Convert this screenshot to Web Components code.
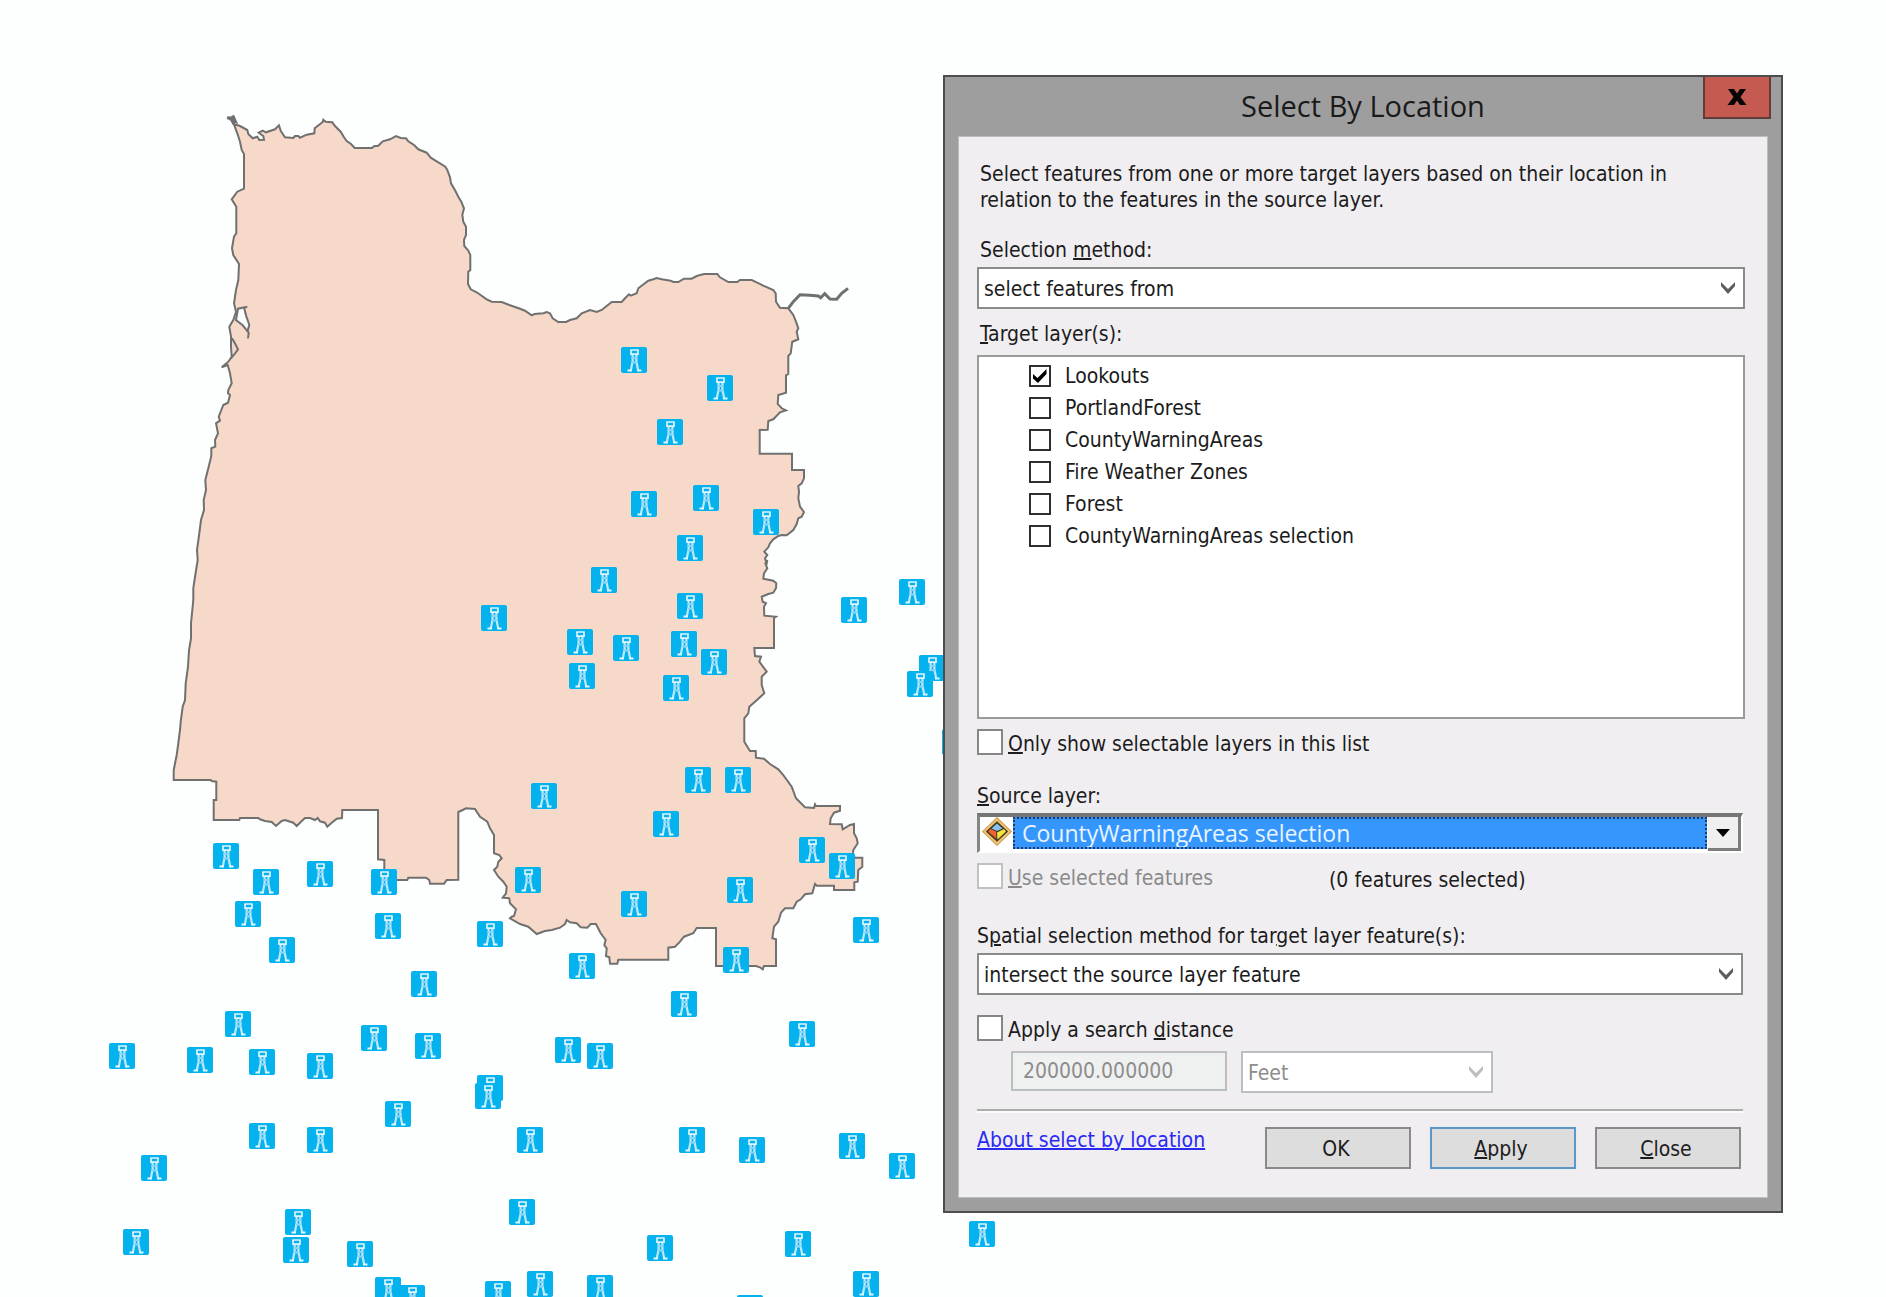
<!DOCTYPE html>
<html lang="en">
<head>
<meta charset="utf-8">
<title>Select By Location</title>
<style>
  html, body { height: 100%; }
  body {
    margin: 0;
    background: #fdfefe;
    color: #1c1c1c;
    font: 21px/26px "DejaVu Sans Condensed", "Liberation Sans", sans-serif;
  }
</style>
</head>
<body>
<map-workspace>
  <lookout-map></lookout-map>
  <dialog-window slot="window" heading="Select By Location">
    <location-form></location-form>
  </dialog-window>
</map-workspace>

<script>
/* Shared base: clones the class's markup into an open shadow root. */
class Base extends HTMLElement {
  connectedCallback() {
    if (this.shadowRoot) return;
    const t = document.createElement('template');
    t.innerHTML = this.view();
    this.attachShadow({ mode: 'open' }).append(t.content.cloneNode(true));
  }
  attr(name, fallback = '') { return this.getAttribute(name) ?? fallback; }
}

/* Free canvas that holds the map and the windows floating over it. */
customElements.define('map-workspace', class extends Base {
  view() {
    return `<style>
      :host { display: block; position: relative; height: 100vh; overflow: hidden; }
    </style><slot></slot><slot name="window"></slot>`;
  }
});

/* Boundary sections, digitised at three units per pixel from each sheet's own corner. */
const BOUNDARY = [
  [160, 90, '222,103 240,108 262,120 265,132 278,145 292,140 298,150 312,149 310,138 296,128 308,122 318,127 345,118 357,106 362,122 375,142 400,144 405,138 415,138 420,143 440,134 463,130 464,115 488,96 490,89 497,95 517,97 525,108 542,125 552,142 560,153 573,162 584,174 636,174 642,169 655,167 668,154 690,148 708,138 722,144 738,145 745,154 762,165 775,178 800,188 812,203 830,214 856,230 862,240 870,262 873,280 886,302 895,320 904,335 912,355 907,375 910,395 918,410 918,435 912,450 913,468 925,482 931,495 931,540 925,545 924,582 932,598 950,607 980,628 995,635 1025,636 1048,645'],
  [480, 250, '120,176 135,182 155,196 163,192 190,190 200,186 210,190 218,205 235,216 258,216 270,210 290,205 305,190 330,180 350,186 365,180 395,156 425,156 435,145 447,133 452,137 470,130 475,115 505,92 520,88 530,84 545,88 572,92 580,96 595,96 612,86 635,86 650,78 672,72 712,72 720,82 745,96 772,96 780,90 815,90 830,97 850,107 880,120 887,130 888,155 900,173 925,175 940,195 948,215 955,235 950,245 955,268 937,275 932,310 925,318 925,372 918,376 918,428 895,435 893,462 905,475 918,481 900,487 880,508 865,513 863,539 839,540 839,611 936,611 936,660 972,660 972,685 965,700 955,708 957,725 955,745 960,770 972,786 965,800 955,805 950,822 940,840 920,856 905,855 895,858 880,868 870,880 865,892 853,905 862,915 855,925 860,940'],
  [560, 560, '622,0 616,10 622,25 612,40 610,56 640,62 649,70 648,85 640,98 625,102 605,110 608,125 618,130 612,140 613,167 648,170 642,175 642,264 583,264 585,288 603,290 598,305 620,335 605,350 605,375 613,400 585,425 568,440 565,460 553,475 553,545 570,573 587,573 588,593 612,596 630,612 655,628 670,645 695,680 708,715 735,742 762,744 765,733 768,738 840,738 840,752 822,758 812,775 810,792 845,793 848,808 870,795 882,792 882,820 890,835 893,850 880,870 878,885 885,893 907,893 907,920 895,930 893,965 883,967 883,990 822,990 822,977 770,977 765,972 757,1000 735,1003 722,1018 710,1025 700,1045 675,1045 663,1058 655,1085 642,1100 637,1135 648,1138 648,1218 612,1218 608,1228 600,1222 588,1218 468,1218 468,1104 410,1104 400,1120 372,1130 360,1145 345,1160 325,1163 325,1199 175,1199 172,1211 150,1211 148,1192 138,1188 140,1165 133,1155 137,1140 122,1120 108,1092 92,1092 82,1103 62,1102 50,1090 30,1087 20,1080 15,1092'],
  [150, 740, '1230,563 1205,570 1185,573 1160,582 1135,560 1110,552 1080,535 1085,530 1092,528 1098,508 1080,490 1078,475 1058,473 1068,460 1070,440 1060,425 1045,410 1032,390 1042,380 1045,365 1055,355 1048,345 1032,340 1032,285 1020,265 1012,245 990,230 975,207 948,205 938,210 925,216 925,419 890,420 882,431 840,431 838,420 828,413 775,413 772,420 703,420 703,360 684,358 684,210 577,210 576,234 560,236 545,248 532,260 525,248 510,244 503,234 495,240 480,234 465,234 452,246 440,258 430,248 405,240 395,243 378,258 365,246 345,243 330,238 325,234 270,234 268,240 191,240 191,180 199,180 199,125 185,123 182,120 71,120 71,90 80,45 85,10'],
  [0, 0, '540,2190 542,2165 548,2120 555,2100 557,2050 564,2000 567,1950 573,1915 573,1870 580,1800 580,1765 586,1725 593,1680 591,1650 598,1600 603,1560 612,1530 611,1500 618,1470 616,1440 626,1400 634,1368 634,1345 646,1340 645,1320 654,1300 648,1270 660,1262 656,1250 670,1215 684,1208 690,1185 684,1180'],
  [160, 90, '205,900 215,880 210,850 203,825 185,832 205,815 215,800 213,770 213,740 208,710 220,690 228,665 222,640 228,600 235,570 237,522 220,495 216,475 222,440 229,430 229,350 215,328 232,305 252,296 252,192 245,180 240,155 232,130']
];
const trace = (ox, oy, pts) => pts.split(' ').map(p => {
  const [x, y] = p.split(',');
  return (ox + x / 3).toFixed(1) + ',' + (oy + y / 3).toFixed(1);
}).join(' ');

/* Lookout towers, by the centre of each symbol. */
const LOOKOUTS = [
  [634,360],[720,388],[670,432],[644,504],[706,498],[766,522],[690,548],[604,580],[690,606],[494,618],
  [580,642],[626,648],[684,644],[714,662],[582,676],[676,688],[854,610],[912,592],[932,668],[920,684],[955,742],
  [698,780],[738,780],[544,796],[666,824],[812,850],[842,866],[740,890],[528,880],[634,904],[866,930],[736,960],
  [582,966],[684,1004],[226,856],[266,882],[320,874],[384,882],[248,914],[282,950],[388,926],[490,934],[424,984],
  [238,1024],[374,1038],[428,1046],[122,1056],[200,1060],[262,1062],[320,1066],[568,1050],[600,1056],[802,1034],
  [490,1088],[488,1096],[398,1114],[262,1136],[320,1140],[530,1140],[692,1140],[752,1150],[852,1146],[902,1166],
  [154,1168],[298,1222],[296,1250],[136,1242],[360,1254],[522,1212],[660,1248],[798,1244],[982,1234],
  [388,1290],[412,1298],[498,1294],[540,1284],[600,1288],[750,1308],[866,1284]
];

customElements.define('lookout-map', class extends Base {
  view() {
    const outline = BOUNDARY.map(s => trace(...s)).join(' ');
    const pins = LOOKOUTS.map(([x, y]) => `<use href="#tower" x="${x - 13}" y="${y - 13}"/>`).join('');
    return `<style>
      :host { display: block; height: 100%; }
      svg { display: block; width: 100%; height: 100%; }
      .line { fill: none; stroke: #707070; stroke-width: 2; }
      .spur { stroke-width: 3; }
    </style>
    <svg role="img" aria-label="Map of fire lookouts">
      <defs>
        <g id="tower">
          <rect width="26" height="26" rx="2" fill="#04b2ee"/>
          <path d="M9.500 3H17.500M10 2.500V8M17 2.500V8M10 7.200H17" fill="none" stroke="#e0f4fd" stroke-width="1.700"/>
          <path d="M11.600 8V14.500L9.800 23.500M15.400 8V14.500L17.200 23.500" fill="none" stroke="#bfe8fa" stroke-width="2.200"/>
          <path d="M11 11H16M11 15.500H16" fill="none" stroke="#8fd6f5" stroke-width="2"/>
          <path d="M6.500 23.500H11M16 23.500H20.500" stroke="#e4f6fd" stroke-width="1.800"/>
        </g>
      </defs>
      <polygon points="${outline}" fill="#f7d9c9" stroke="#707070" stroke-width="2"/>
      <polygon points="${trace(160, 90, '232,655 250,655 256,680 268,705 258,718 244,706 228,690')}" fill="#fdfefe"/>
      <polyline class="line" points="${trace(160, 90, '262,650 234,656 228,690 248,706 266,728 264,745')}"/>
      <polyline class="line" points="${trace(160, 90, '252,652 258,676 268,705 262,726')}"/>
      <polyline class="line" points="${trace(160, 90, '216,745 226,762 234,778 224,792 212,806')}"/>
      <polyline class="line spur" points="${trace(160, 90, '222,103 212,84 202,83 226,94 218,76')}"/>
      <polyline class="line spur" points="${trace(480, 250, '925,175 940,155 960,134 990,136 1015,138 1022,143 1034,131 1050,147 1070,148 1085,130 1104,115')}"/>
      ${pins}
    </svg>`;
  }
});

/* Window frame with a title bar, a close button and a content area. */
customElements.define('dialog-window', class extends Base {
  view() {
    return `<style>
      :host {
        display: flex; flex-direction: column; box-sizing: border-box;
        position: absolute; left: 50%; right: 103px; top: 75px;
        border: 2px solid #4d4d4d; background: #9e9e9e; padding: 0 14px 14px;
      }
      header { display: grid; grid-template-columns: 1fr auto 1fr; height: 60px; align-items: start; }
      h1 { grid-column: 2; margin: 8px 0 0; font: 400 29px/42px "Open Sans", sans-serif; color: #1a1a1a; }
      button {
        justify-self: end; display: grid; place-items: center; width: 68px; height: 42px; padding: 0; margin-right: -4px;
        background: #c45a50; border: 2px solid #633c39; border-top: 0;
      }
      main { background: #f0eef1; box-shadow: 0 0 0 1px #bdbcbe; }
    </style>
    <header>
      <h1>${this.attr('heading')}</h1>
      <button type="button" aria-label="Close window">
        <svg width="20" height="16" viewBox="0 0 20 16"><path d="M1 0H7L10 4.500L13 0H19L13.500 8L19.500 16H13L10 11.500L7 16H0.500L6.500 8Z" fill="#050505"/></svg>
      </button>
    </header>
    <main><slot></slot></main>`;
  }
});

/* Caption above a flat drop-down. */
customElements.define('select-field', class extends Base {
  view() {
    return `<style>
      :host { display: flex; flex-direction: column; gap: 4px; }
      label { padding-left: var(--label-inset, 0); }
      ::slotted(u) { text-decoration-thickness: 2px; }
      div { display: grid; align-items: center; }
      select {
        grid-area: 1 / 1; width: 100%; height: 42px; box-sizing: border-box; margin: 0; padding: 2px 40px 0 5px;
        appearance: none; font: inherit; color: #1c1c1c; background: #fff;
        border: 2px solid #8b8b8b; border-radius: 0; opacity: 1;
      }
      svg { grid-area: 1 / 1; justify-self: end; margin-right: 9px; pointer-events: none; color: #5c5c5c; }
      select:disabled { color: #8d8d8d; border-color: #bcbfc1; }
      select:disabled + svg { color: #bdbdbd; }
    </style>
    ${this.hasAttribute('label') ? '' : '<label for="s"><slot></slot></label>'}
    <div>
      <select id="s" ${this.hasAttribute('label') ? `aria-label="${this.attr('label')}"` : ''} ${this.hasAttribute('disabled') ? 'disabled' : ''}><option>${this.attr('value')}</option></select>
      <svg width="16" height="14" viewBox="0 0 16 14"><path d="M1 1V5L8 13L15 5V1L8 8Z" fill="currentColor"/></svg>
    </div>`;
  }
});

/* Sunken drop-down that shows a layer symbol beside the highlighted value. */
customElements.define('layer-select', class extends Base {
  view() {
    return `<style>
      :host { display: flex; flex-direction: column; gap: 4px; }
      ::slotted(u) { text-decoration-thickness: 2px; }
      .box {
        display: grid; grid-template-columns: 33px 1fr 34px; height: 40px; box-sizing: border-box;
        background: #fff; border: solid; border-width: 4px 2px 2px 3px; border-color: #757575 #fff #fff #858585;
      }
      .sym { justify-self: center; align-self: start; }
      select {
        margin: 0 0 2px; padding: 0 0 0 7px; appearance: none; font: 23px/28px "Open Sans", sans-serif;
        color: #e9f4ff; background: #3597fe; border: 2px dotted #1d3a66; border-radius: 0; outline: 0; min-width: 0;
      }
      .arrow {
        display: grid; place-items: center; background: #f0eff0;
        border: solid #7c7c7c; border-width: 0 3px 3px 0; margin-left: 1px;
      }
    </style>
    <label for="s"><slot></slot></label>
    <div class="box">
      <svg class="sym" width="32" height="30" viewBox="0 0 32 30">
        <path d="M16 0L31 14.500L16 29L1 14.500Z" fill="#c98f35"/>
        <path d="M16 2.500L28.500 14.500L16 26.500L3.500 14.500Z" fill="none" stroke="#e9c078" stroke-width="2"/>
        <path d="M16 4.500L27 14.500L16 24.500L5 14.500Z" fill="#3c3526"/>
        <path d="M16 6.500L21.500 11.500L16 14L10.500 11.500Z" fill="#86c3ee"/>
        <path d="M9.500 12L15 14.500L15.500 22L7 14.500Z" fill="#f2622b"/>
        <path d="M23 12L25 14.500L16.500 22.500L16 15.500Z" fill="#f4e43c"/>
      </svg>
      <select id="s"><option>${this.attr('value')}</option></select>
      <span class="arrow"><svg width="14" height="8" viewBox="0 0 14 8"><path d="M0 0H14L7 8Z"/></svg></span>
    </div>`;
  }
});

/* Tick box with its caption; "compact" is the variant used in lists. */
customElements.define('check-row', class extends Base {
  view() {
    return `<style>
      :host { display: flex; align-items: flex-start; gap: 5px; line-height: 30px; }
      :host([compact]) { align-items: center; gap: 14px; line-height: 32px; }
      .tick { display: grid; }
      .tick > * { grid-area: 1 / 1; }
      input {
        appearance: none; box-sizing: border-box; width: 26px; height: 26px; margin: 0;
        background: #fff; border: 2px solid #868686;
      }
      :host([compact]) input { width: 22px; height: 22px; border-color: #2f2f2f; }
      svg { place-self: center; visibility: hidden; pointer-events: none; }
      input:checked + svg { visibility: visible; }
      input:disabled { border-color: #bfc2c3; }
      :host([disabled]) label { color: #8a8a8a; }
      ::slotted(u) { text-decoration-thickness: 2px; }
    </style>
    <span class="tick">
      <input type="checkbox" id="c" ${this.hasAttribute('checked') ? 'checked' : ''} ${this.hasAttribute('disabled') ? 'disabled' : ''}>
      <svg width="16" height="16" viewBox="0 0 16 16"><path d="M1 6L5.500 10L14.500 1V6L6 15L1 10.500Z"/></svg>
    </span>
    <label for="c"><slot></slot></label>`;
  }
});

customElements.define('layer-list', class extends Base {
  view() {
    return `<style>
      :host {
        display: flex; flex-direction: column; box-sizing: border-box; min-height: 364px; padding: 3px 50px;
        background: #fff; border: 2px solid #9a9a9a;
      }
    </style><slot></slot>`;
  }
});

customElements.define('push-button', class extends Base {
  view() {
    return `<style>
      :host { display: block; }
      button {
        width: 146px; height: 42px; box-sizing: border-box; padding: 2px 4px 0 0; font: inherit; color: #1c1c1c;
        background: #dddddd; border: 2px solid #8a8a8a; border-radius: 0;
      }
      :host([primary]) button { border-color: #5e97c4; box-shadow: 0 0 2px #d5ecfb; }
      ::slotted(u) { text-decoration-thickness: 2px; }
    </style><button type="button"><slot></slot></button>`;
  }
});

customElements.define('location-form', class extends Base {
  view() {
    return `<style>
      :host { display: flex; flex-direction: column; padding: 24px 22px 28px 18px; --label-inset: 3px; }
      u { text-decoration-thickness: 2px; }
      p { margin: 0 0 24px; padding: 0 3px; }
      .caption { padding-left: 3px; margin: 12px 0 8px; }
      .options { margin-top: 10px; }
      .lower { display: flex; flex-direction: column; padding-right: 2px; --label-inset: 0; }
      .source { margin-top: 24px; }
      .use { display: grid; grid-template-columns: 352px 1fr; margin-top: 10px; line-height: 34px; height: 30px; }
      .spatial { margin-top: 30px; }
      .search { margin-top: 20px; }
      .distance { display: flex; gap: 14px; padding-left: 34px; margin-top: 6px; }
      .distance input {
        width: 216px; height: 40px; box-sizing: border-box; padding: 0 10px; font: inherit;
        color: #8d8d8d; background: #eff0f0; border: 2px solid #bcbfc1; border-radius: 0;
      }
      .distance select-field { width: 252px; }
      hr { width: 100%; box-sizing: border-box; margin: 16px 0 14px; border: 0; border-top: 2px solid #adadad; border-bottom: 2px solid #fbfbfb; }
      footer { display: flex; align-items: flex-start; padding-right: 2px; }
      footer a { margin-right: auto; color: #2a2af5; text-decoration-thickness: 2px; }
      .buttons { display: flex; gap: 19px; }
    </style>
    <p>Select features from one or more target layers based on their location in relation to the features in the source layer.</p>
    <select-field value="select features from">Selection <u>m</u>ethod:</select-field>
    <div class="caption" id="layers"><u>T</u>arget layer(s):</div>
    <layer-list role="group" aria-labelledby="layers">
      <check-row compact checked>Lookouts</check-row>
      <check-row compact>PortlandForest</check-row>
      <check-row compact>CountyWarningAreas</check-row>
      <check-row compact>Fire Weather Zones</check-row>
      <check-row compact>Forest</check-row>
      <check-row compact>CountyWarningAreas selection</check-row>
    </layer-list>
    <check-row class="options"><u>O</u>nly show selectable layers in this list</check-row>
    <div class="lower">
      <layer-select class="source" value="CountyWarningAreas selection"><u>S</u>ource layer:</layer-select>
      <div class="use">
        <check-row disabled><u>U</u>se selected features</check-row>
        <span>(0 features selected)</span>
      </div>
      <select-field class="spatial" value="intersect the source layer feature">S<u>p</u>atial selection method for tar<u>g</u>et layer feature(s):</select-field>
      <check-row class="search">Apply a search <u>d</u>istance</check-row>
      <div class="distance">
        <input type="text" value="200000.000000" aria-label="Search distance" disabled>
        <select-field label="Distance unit" value="Feet" disabled></select-field>
      </div>
      <hr>
      <footer>
        <a href="#about">About select by location</a>
        <div class="buttons">
          <push-button>OK</push-button>
          <push-button primary><u>A</u>pply</push-button>
          <push-button><u>C</u>lose</push-button>
        </div>
      </footer>
    </div>`;
  }
});
</script>
</body>
</html>
